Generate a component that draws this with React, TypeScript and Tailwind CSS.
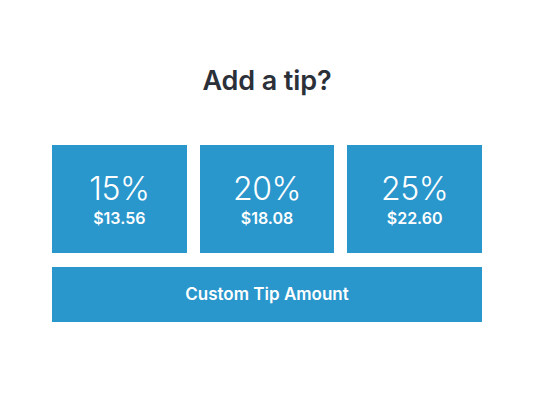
const tips = [
  { pct: '15%', amount: '$13.56' },
  { pct: '20%', amount: '$18.08' },
  { pct: '25%', amount: '$22.60' },
];

export default function App() {
  return (
    <div className="w-[534px] h-[400px] bg-white flex flex-col items-center font-['Inter',sans-serif]">
      <h1 className="mt-[63px] h-[36px] text-[27px] leading-[36px] font-semibold text-[#2b3039] tracking-[-0.1px]">Add a tip?</h1>
      <div className="mt-[46px] w-[430px] grid grid-cols-3 gap-[13px]">
        {tips.map((t) => (
          <button key={t.pct} className="h-[108px] bg-[#2996cc] text-white flex flex-col items-center justify-center">
            <span className="text-[32px] leading-[36px] font-light tracking-[-0.5px]">{t.pct}</span>
            <span className="text-[16px] leading-[20px] font-semibold mt-[1px]">{t.amount}</span>
          </button>
        ))}
      </div>
      <button className="mt-[14px] w-[430px] h-[55px] bg-[#2996cc] text-white text-[17px] font-semibold">
        Custom Tip Amount
      </button>
    </div>
  );
}
